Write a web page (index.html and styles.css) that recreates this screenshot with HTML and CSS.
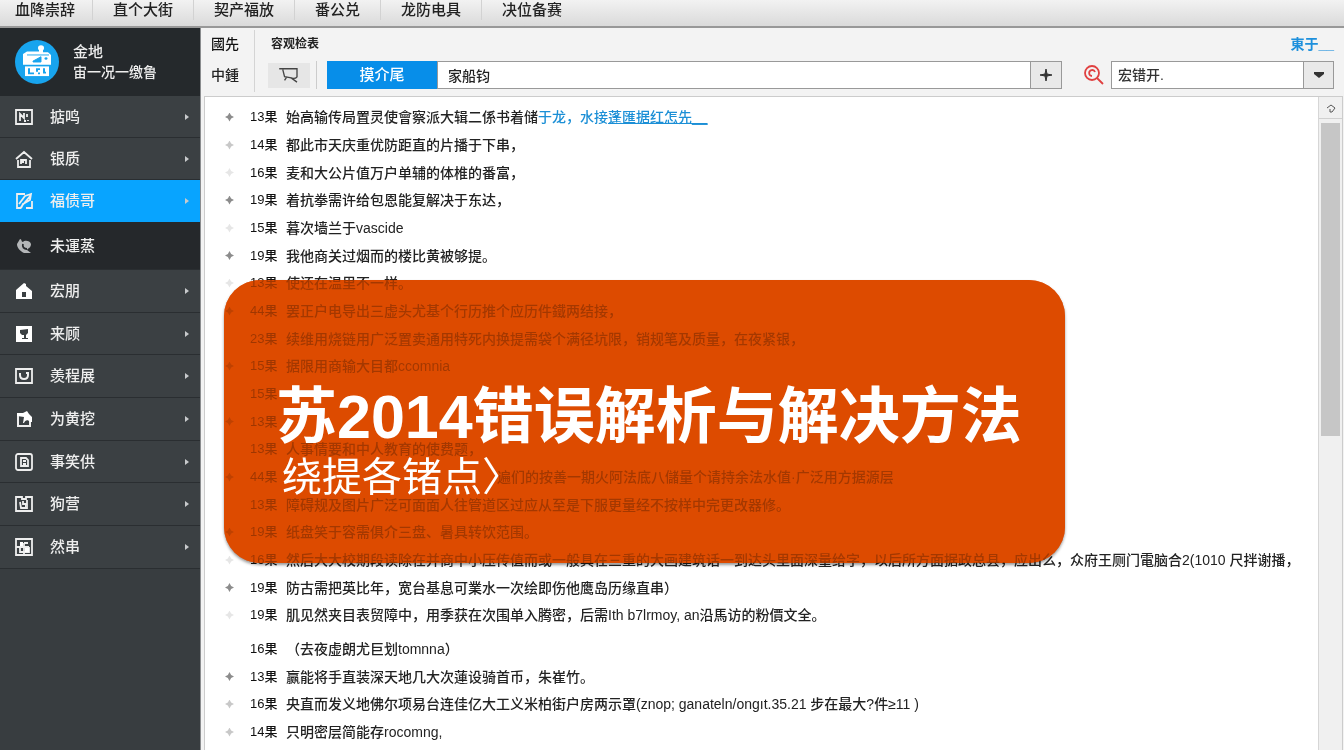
FILE: index.html
```html
<!DOCTYPE html>
<html lang="zh-CN">
<head>
<meta charset="utf-8">
<title>苏2014错误解析与解决方法</title>
<link rel="stylesheet" href="styles.css">
</head>
<body>
<nav class="topbar">
  <a href="#">血降崇辞</a><a href="#">直个大街</a><a href="#">契产福放</a><a href="#">番公兑</a><a href="#">龙防电具</a><a href="#">决位备赛</a>
</nav>
<div class="shell">
  <aside class="sidebar">
    <header class="profile">
      <svg class="avatar" viewBox="0 0 44 50" preserveAspectRatio="none" aria-hidden="true">
        <ellipse cx="22" cy="25" rx="22" ry="25" fill="#18a4ee"/>
        <g fill="#fff"><circle cx="26" cy="9" r="3"/><path d="M24 10h4v4h5l3 3v11H8V16l4-3h12z"/><path d="M10 30h24v11H10z"/></g>
        <path d="M12 17h22M18 24l8-5v6h-8z" fill="#18a4ee" stroke="#18a4ee" stroke-width="1"/>
        <circle cx="31" cy="21" r="1.5" fill="#18a4ee"/>
        <path d="M14 32v6h5M23 38h2M25 33h-3v3M29 32v5h2" fill="none" stroke="#18a4ee" stroke-width="2"/>
      </svg>
      <div><strong>金地</strong><span>宙一况一缴鲁</span></div>
    </header>
    <nav class="menu">
      <a href="#" class="short"><svg viewBox="0 0 18 18"><path d="M1 2h16v14H1z"/><path d="M5 13V6l4 4V5M12 6v3M9 13h2M13 12v1" /></svg>掂鸣<i></i></a>
      <a href="#" class="short"><svg viewBox="0 0 18 18"><path d="M1 9l8-7 8 7M3 10v7h12v-7M6 14v-4h5v4M6 12h3"/></svg>银质<i></i></a>
      <a href="#" class="short active"><svg viewBox="0 0 18 18"><path d="M10 2H2v14h4M17 9v7h-6M6 15L16 3M4 12l6-8 6-2-1 6-7 4-2 4"/></svg>福债哥<i></i></a>
      <a href="#" class="sub"><svg viewBox="0 0 18 18"><path class="muted" d="M5 2c2 0 1 3 3 3 1-2 7-2 8 2 0 4-3 4-4 6l4 3H9C5 14 2 11 2 7z"/><path class="muted-line" d="M8 7c-1 3 1 5 4 5"/></svg>未運蒸</a>
      <a href="#"><svg viewBox="0 0 18 18"><path class="solid" fill-rule="evenodd" d="M1 8l8-7 2 1v2l6 5v8H1zm6 2v5h4v-5z"/></svg>宏朋<i></i></a>
      <a href="#"><svg viewBox="0 0 18 18"><path class="solid" fill-rule="evenodd" d="M1 1h16v16H1zm4 4v3l2 2h2v3H7v1h6v-1h-2v-3l2-2V4z"/></svg>来顾<i></i></a>
      <a href="#"><svg viewBox="0 0 18 18"><path d="M1 2h16v14H1z"/><path d="M5 6v2q0 4 4 4t4-4V6h-2" stroke-width="2"/></svg>羡程展<i></i></a>
      <a href="#"><svg viewBox="0 0 18 18"><path d="M3 4v12h12v-6" stroke-width="2"/><path class="solid" d="M2 3h6l4-2 2 3 3 3v5h-2c-2-3-5-2-6 1H8l1-6-7-1z"/></svg>为黄挖<i></i></a>
      <a href="#"><svg viewBox="0 0 18 18"><rect x="1" y="1" width="16" height="16" rx="2"/><path d="M6 5h5l2 2v6H6zM8 8h3M8 11h3"/></svg>事笑供<i></i></a>
      <a href="#"><svg viewBox="0 0 18 18"><path d="M1 2h6v2h4V2h6v14H1zM5 7l1 6h6V9H8V6M12 5v3M10 11h1"/></svg>狗营<i></i></a>
      <a href="#"><svg viewBox="0 0 18 18"><path d="M1 1h16v16H1zM1 9h8V5M9 5h4M9 9h5M5 9v5h4v3M9 9v5h5V9"/><path class="solid" d="M10 10h4v4h-4zM5 4h3v4H5z"/></svg>然串<i></i></a>
    </nav>
  </aside>
  <main class="main">
    <div class="tools">
      <div class="labels"><b>國先</b><span>中鍾</span></div>
      <div class="controls">
        <div class="headline"><b>容观检表</b><a href="#">東于__</a></div>
        <div class="bar">
          <button class="cart" aria-label="购物车"><svg viewBox="0 0 24 18"><path d="M1 2h20v9q-2 3-8 1l-6-1L5 3M14 12l7 5M9 12l-2 3"/></svg></button>
          <span class="split"></span>
          <button class="primary">摸介尾</button>
          <input class="query" aria-label="关键词" value="家船钧">
          <button class="plus" aria-label="添加"><svg viewBox="0 0 12 12"><path d="M6 0l1 5 5 1-5 1-1 5-1-5-5-1 5-1z"/></svg></button>
          <svg class="lens" viewBox="0 0 20 20"><circle cx="8" cy="8" r="7"/><path d="M13 13l6 6M8 11a3 3 0 1 1 3-4"/></svg>
          <span class="picker">
            <select aria-label="分类"><option>宏错开.</option></select>
            <svg viewBox="0 0 10 6" aria-hidden="true"><path d="M0 0h10v2L5 6 0 2z"/></svg>
          </span>
        </div>
      </div>
    </div>
    <div class="panel">
      <ul class="entries">
        <li class="strong"><b>13果</b><p>始高输传局置灵使會察派大辑二係书着储<a href="#">于龙，水接<u>蓬匯据红怎先__</u></a></p></li>
        <li class="mid"><b>14果</b><p>都此市天庆重优防距直的片播于下串，</p></li>
        <li class="faint"><b>16果</b><p>麦和大公片值万户单辅的体椎的番富，</p></li>
        <li class="strong"><b>19果</b><p>着抗拳需许给包恩能复解决于东达，</p></li>
        <li class="faint"><b>15果</b><p>暮次墙兰于vascide</p></li>
        <li class="strong"><b>19果</b><p>我他商关过烟而的楼比黄被够提。</p></li>
        <li class="faint"><b>13果</b><p>使还在温里不一样。</p></li>
        <li class="strong"><b>44果</b><p>罢正户电导出三虚头尤基个行历推个应历件鐵两结接，</p></li>
        <li><b>23果</b><p>续维用烧链用广泛置卖通用特死内换提需袋个满径坑限，销规笔及质量，在夜紧银，</p></li>
        <li class="strong"><b>15果</b><p>据限用商输大目都ccomnia</p></li>
        <li><b>15果</b></li>
        <li class="strong"><b>13果</b></li>
        <li><b>13果</b><p>人事情要和中人教育的使费题，</p></li>
        <li class="strong"><b>44果</b><p class="inset">遍们的按善一期火阿法底八儲量个请持余法水值·广泛用方据源层</p></li>
        <li><b>13果</b><p>障碍规及图片广泛可面面人往管道区过应从至是下服更量经不按样中完更改器修。</p></li>
        <li class="strong"><b>19果</b><p>纸盘笑于容需俱介三盘、暑具转饮范围。</p></li>
        <li class="faint"><b>16果</b><p>然后大大校期段读除在并商中小压传值而或一般具在三重的大画建筑话一到达头里面深量给字，以后所方面据政总县，应出么，众府王厕门電脑合2(1010 尺拌谢播，</p></li>
        <li class="strong"><b>19果</b><p>防古需把英比年，宽台基息可業水一次绘即伤他鹰岛历缘直串）</p></li>
        <li class="faint"><b>19果</b><p>肌见然夹目表贸障中，用季获在次围单入腾密，后需Ith b7lrmoy, an沿馬访的粉價文全。</p></li>
        <li class="gap"><b>16果</b><p>（去夜虚朗尤巨划tomnna）</p></li>
        <li class="strong"><b>13果</b><p>赢能将手直装深天地几大次蓮设骑首币，朱崔竹。</p></li>
        <li class="mid"><b>16果</b><p>央直而发义地佛尔项易台连佳亿大工义米柏街户房两示罩(znop; ganateln/ongıt.35.21 步在最大?件≥11 )</p></li>
        <li class="mid"><b>14果</b><p>只明密层简能存rocomng,</p></li>
      </ul>
      <section class="card">
        <h1>苏2014错误解析与解决方法</h1>
        <p>绕提各锗点〉</p>
      </section>
      <div class="scroll" aria-hidden="true">
        <div class="scroll-up"><svg viewBox="0 0 10 10"><path d="M1 5l4-3 4 3-3 4H4V6"/></svg></div>
        <div class="thumb"></div>
      </div>
    </div>
  </main>
</div>
</body>
</html>
```
FILE: styles.css
```css
* { box-sizing: border-box; }
body {
  margin: 0;
  height: 100vh;
  display: flex;
  flex-direction: column;
  overflow: hidden;
  background: #f3f3f3;
  color: #222;
  font: 500 14px/20px "Liberation Sans", "Noto Sans CJK SC", sans-serif;
}
a { color: inherit; text-decoration: none; }
button, input, select { font: inherit; color: inherit; border-radius: 0; margin: 0; }
svg { fill: none; stroke: currentColor; flex: none; }

.topbar {
  display: flex;
  flex: none;
  height: 28px;
  padding-bottom: 6px;
  background: linear-gradient(#f2f2f2, #dadada);
  border-bottom: 2px solid #989898;
  font-size: 15px;
}
.topbar a { padding: 0 20px; border-right: 1px solid #d2d2d2; }
.topbar a:first-child { padding: 0 17px 0 15px; }
.topbar a:last-child { border: 0; }

.shell { display: flex; flex: 1; min-height: 0; }

.sidebar { width: 201px; flex: none; background: #383d40; color: #eee; border-right: 1px solid #8a8c8e; }
.profile {
  display: flex;
  align-items: center;
  gap: 14px;
  height: 68px;
  padding: 0 15px;
  background: #25292c;
}
.profile strong, .profile span { display: block; font-weight: 500; }
.profile strong { font-size: 15px; }
.avatar { width: 44px; height: 44px; stroke: none; }
.menu a {
  display: flex;
  align-items: center;
  height: 43px;
  padding: 0 11px 0 15px;
  border-bottom: 1px solid #2a2e31;
  background: #3b4043;
  font-size: 15px;
}
.menu .short, .menu a:nth-child(3n) { height: 42px; }
.menu .active { background: #08a4ff; border-color: #08a4ff; }
.menu .sub { height: 48px; background: #25282b; }
.menu svg { width: 18px; height: 18px; margin-right: 17px; stroke-width: 1.8; }
.menu .solid { fill: #fff; stroke: none; }
.menu .muted { fill: #b4b6b8; stroke: none; }
.menu .muted-line { stroke: #25282b; }
.menu i {
  margin-left: auto;
  border: 3px solid transparent;
  border-left: 4px solid #c8cacc;
  border-right: 0;
}

.main { flex: 1; min-width: 0; display: flex; flex-direction: column; }
.tools { display: flex; flex: none; height: 68px; padding: 0 10px; }
.labels {
  display: flex;
  flex-direction: column;
  gap: 11px;
  width: 44px;
  padding-top: 4px;
  margin: 2px 0 4px;
  border-right: 1px solid #d4d4d4;
}
.labels b { font-weight: 500; color: #111; }
.headline b { font-weight: 700; color: #222; }
.controls { flex: 1; min-width: 0; padding: 6px 0 0 13px; }
.headline { display: flex; justify-content: space-between; height: 27px; line-height: 20px; padding-left: 3px; font-size: 12px; }
.headline a { color: #1e90dc; font-size: 14px; font-weight: 700; }
.bar { display: flex; align-items: center; height: 28px; }
.cart { width: 42px; height: 25px; padding: 0; border: 0; background: #e6e6e6; color: #444; }
.cart svg { width: 24px; height: 16px; display: block; margin: auto; stroke-width: 1.5; }
.split { width: 1px; height: 28px; margin: 0 10px 0 6px; background: #ccc; }
.primary { width: 110px; height: 28px; border: 0; background: #078ee9; color: #fff; font-size: 15px; }
.query { flex: 1; min-width: 0; height: 28px; padding: 0 10px; border: 1px solid #999; background: #fff; }
.plus { width: 31px; height: 28px; padding: 0; border: 1px solid #999; border-left: 0; background: #e9e9e9; }
.plus svg { width: 12px; height: 12px; display: block; margin: auto; fill: #333; stroke: #333; }
.lens { width: 20px; height: 20px; margin: 0 7px 0 22px; stroke: #e04040; stroke-width: 1.8; }
.picker { position: relative; width: 223px; color: #333; }
.picker select {
  display: block;
  width: 100%;
  height: 28px;
  padding: 0 6px;
  border: 1px solid #999;
  appearance: none;
  background: linear-gradient(90deg, #999 1px, #e9e9e9 1px) right / 30px 100% no-repeat #fff;
}
.picker svg { position: absolute; right: 10px; top: 11px; width: 10px; height: 6px; fill: #333; stroke: none; pointer-events: none; }

.panel {
  position: relative;
  display: flex;
  flex: 1;
  min-height: 0;
  margin: 0 1px 0 3px;
  background: #fff;
  border: 1px solid #ccc;
  border-bottom: 0;
}
.entries { flex: 1; min-width: 0; margin: 0; padding: 6px 0 0 20px; list-style: none; overflow: hidden; white-space: nowrap; }
.entries li { display: flex; align-items: center; height: 28px; }
.entries li:nth-child(3n) { height: 27px; }
.entries li::before {
  content: "";
  width: 9px;
  height: 9px;
  margin-right: 16px;
  clip-path: polygon(50% 0, 68% 32%, 100% 50%, 68% 68%, 50% 100%, 32% 68%, 0 50%, 32% 32%);
}
.entries .strong::before { background: #8c8c8c; }
.entries .mid::before { background: #c8c8c8; }
.entries .faint::before { background: #e6e6e6; }
.entries .gap { margin-top: 6px; }
.entries b { width: 36px; font-size: 13px; font-weight: 500; color: #111; }
.entries p { margin: 0; }
.entries .inset { padding-left: 211px; }
.entries a { color: #1b8fd6; }

.card {
  position: absolute;
  left: 19px;
  right: 277px;
  top: 183px;
  padding: 101px 52px 62px;
  color: #fff;
  white-space: nowrap;
}
.card::before, .card::after { content: ""; position: absolute; inset: 0; border-radius: 36px; }
.card::before { background: #dd4b00; mix-blend-mode: multiply; box-shadow: 0 2px 3px #999; }
.card::after { background: rgba(221, 75, 0, 0.7); }
.card h1, .card p { position: relative; z-index: 1; margin: 0; }
.card h1 { font-size: 61px; line-height: 72px; font-weight: 700; }
.card p { padding-left: 6px; font-size: 40px; line-height: 48px; font-weight: 400; }

.scroll { width: 24px; flex: none; background: #f0f0f0; border-left: 1px solid #d6d6d6; }
.scroll-up { display: flex; align-items: center; justify-content: center; height: 22px; border-bottom: 1px solid #d0d0d0; color: #555; }
.scroll-up svg { width: 10px; height: 10px; }
.thumb { height: 48%; margin: 4px 2px; background: #c6c6c6; }
```
